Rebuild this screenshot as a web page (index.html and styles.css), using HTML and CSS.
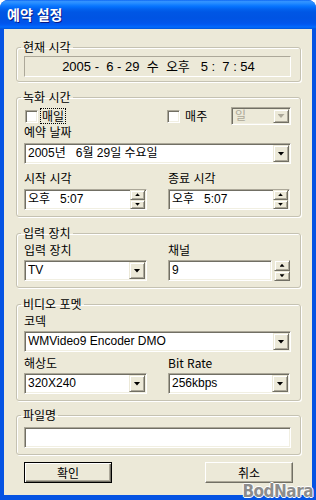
FILE: index.html
```html
<!DOCTYPE html>
<html lang="ko">
<head>
    <meta charset="UTF-8">
    <meta name="viewport" content="width=device-width, initial-scale=1.0">
    <title>예약 설정</title>
    <link rel="stylesheet" href="styles.css">
</head>
<body>
    <div class="window">
        <div class="titlebar"><span class="title">예약 설정</span></div>
        <div class="client">
            <fieldset class="group group-now">
                <legend>현재 시각</legend>
                <div class="clock">2005 -  6 - 29  수  오후   5 :  7 : 54</div>
            </fieldset>

            <fieldset class="group group-rec">
                <legend>녹화 시간</legend>
                <div class="check-row">
                    <label class="check check-day"><span class="box"></span><span class="focus">매일</span></label>
                    <label class="check check-week"><span class="box"></span><span>매주</span></label>
                    <div class="combo combo-day disabled"><span class="value">일</span><span class="drop"></span></div>
                </div>
                <div class="field-label">예약 날짜</div>
                <div class="combo"><span class="value">2005년   6월 29일 수요일</span><span class="drop"></span></div>
                <div class="cols cols-time">
                    <div>
                        <div class="field-label">시작 시각</div>
                        <div class="picker"><span class="value">오후   5:07</span><span class="spin"><span class="up"></span><span class="down"></span></span></div>
                    </div>
                    <div>
                        <div class="field-label">종료 시각</div>
                        <div class="picker"><span class="value">오후   5:07</span><span class="spin"><span class="up"></span><span class="down"></span></span></div>
                    </div>
                </div>
            </fieldset>

            <fieldset class="group group-input">
                <legend>입력 장치</legend>
                <div class="cols">
                    <div>
                        <div class="field-label">입력 장치</div>
                        <div class="combo"><span class="value">TV</span><span class="drop"></span></div>
                    </div>
                    <div>
                        <div class="field-label">채널</div>
                        <div class="updown">
                            <div class="edit"><span class="value">9</span></div>
                            <span class="spin spin-tall"><span class="up"></span><span class="down"></span></span>
                        </div>
                    </div>
                </div>
            </fieldset>

            <fieldset class="group group-video">
                <legend>비디오 포멧</legend>
                <div class="field-label">코덱</div>
                <div class="combo"><span class="value">WMVideo9 Encoder DMO</span><span class="drop"></span></div>
                <div class="cols cols-video">
                    <div>
                        <div class="field-label">해상도</div>
                        <div class="combo"><span class="value">320X240</span><span class="drop"></span></div>
                    </div>
                    <div>
                        <div class="field-label">Bit Rate</div>
                        <div class="combo"><span class="value">256kbps</span><span class="drop"></span></div>
                    </div>
                </div>
            </fieldset>

            <fieldset class="group group-file">
                <legend>파일명</legend>
                <div class="edit"></div>
            </fieldset>

            <div class="buttons">
                <button class="btn btn-default">확인</button>
                <button class="btn">취소</button>
            </div>
        </div>
        <span class="watermark">BodNara</span>
    </div>
</body>
</html>
```

FILE: styles.css
```css
body {
    margin: 0;
    background: #ffffff;
    font-family: "Liberation Sans", "Noto Sans CJK KR", sans-serif;
    font-size: 12px;
    color: #000;
}
.window {
    position: relative;
    width: 316px;
    height: 500px;
    box-sizing: border-box;
    display: flex;
    flex-direction: column;
    background: #0553e3;
    border-radius: 8px 8px 0 0;
    overflow: hidden;
}
.titlebar {
    height: 29px;
    flex: none;
    box-sizing: border-box;
    padding: 6px 0 0 7px;
    background: linear-gradient(to bottom, #0058ee 0, #3593ff 1px, #288eff 3px, #127dff 5px, #036ffc 7px, #0262ee 9px, #0057e5 12px, #0054e3 18px, #0055eb 23px, #005bf5 25px, #026afe 27px, #0062ef 28px, #0052d6 29px);
}
.title {
    color: #fff;
    font-family: "Noto Sans CJK KR", sans-serif;
    font-weight: bold;
    font-size: 14px;
    line-height: 17px;
    text-shadow: 1px 1px 0 #0a1883;
}
.client {
    flex: 1;
    margin: 0 4px 5px 4px;
    padding-top: 11px;
    background: #ece9d8;
}

/* group boxes */
.group {
    width: 285px;
    box-sizing: border-box;
    margin: 0 0 9px 12px;
    padding: 0 9px 6px 7px;
    border: 1px solid #c5c2b2;
    border-radius: 3px;
    box-shadow: inset 1px 1px 0 #fff, 1px 1px 0 #fff;
    min-width: 0;
}
.group legend {
    padding: 0 2px;
    margin-left: -3px;
    line-height: 14px;
    font-family: "Noto Sans CJK KR", sans-serif;
}
.group-now {
    margin-bottom: 8px;
    padding-top: 2px;
    padding-bottom: 4px;
}
.group-rec {
    padding-top: 2px;
}
.group-input {
    padding-top: 3px;
}
.group-video {
    margin-bottom: 7px;
    padding-top: 3px;
}
.group-file {
    margin-bottom: 7px;
    padding-top: 5px;
}
.field-label {
    line-height: 14px;
    font-family: "Noto Sans CJK KR", sans-serif;
    margin-bottom: 4px;
}
.group-input .field-label {
    margin-bottom: 3px;
}
.group-video > .field-label {
    margin-bottom: 3px;
}
.cols {
    display: grid;
    grid-template-columns: 123px 122px;
    column-gap: 21px;
}
.cols-time {
    margin-top: 7px;
}
.cols-video {
    margin-top: 4px;
}
.cols-video .field-label {
    margin-bottom: 3px;
}

/* sunken fields */
.clock {
    height: 21px;
    box-sizing: border-box;
    border: 1px solid;
    border-color: #aca899 #fff #fff #aca899;
    text-align: center;
    white-space: pre;
    font-size: 13px;
    line-height: 19px;
    padding-left: 2px;
}
.combo, .picker, .edit {
    height: 21px;
    box-sizing: border-box;
    display: flex;
    align-items: center;
    background: #fff;
    border: 1px solid;
    border-color: #aca899 #fff #fff #aca899;
    box-shadow: inset 1px 1px 0 #716f64, inset -1px -1px 0 #f1efe2;
    padding: 1px 2px 1px 3px;
}
.value {
    flex: 1;
    white-space: pre;
    overflow: hidden;
    line-height: 17px;
}
.drop {
    width: 16px;
    height: 17px;
    box-sizing: border-box;
    margin-right: -1px;
    display: flex;
    align-items: center;
    justify-content: center;
    background: #ece9d8;
    border: 1px solid;
    border-color: #ece9d8 #716f64 #716f64 #ece9d8;
    box-shadow: inset 1px 1px 0 #fff, inset -1px -1px 0 #aca899;
}
.drop::after {
    content: "";
    width: 7px;
    height: 4px;
    background: #000;
    clip-path: polygon(0 0, 100% 0, 50% 100%);
}
.combo-day {
    width: 60px;
    height: 18px;
    margin-left: auto;
}
.combo-day .drop {
    height: 14px;
}
.disabled {
    background: #ece9d8;
    color: #aca899;
}
.disabled .drop::after {
    background: #aca899;
}

/* spin buttons */
.spin {
    width: 15px;
    display: flex;
    flex-direction: column;
    align-self: stretch;
    margin: -1px -1px -1px 0;
}
.spin .up, .spin .down {
    flex: 1;
    display: flex;
    align-items: center;
    justify-content: center;
    background: #ece9d8;
    border: 1px solid;
    border-color: #ece9d8 #716f64 #716f64 #ece9d8;
    box-shadow: inset 1px 1px 0 #fff, inset -1px -1px 0 #aca899;
}
.spin .up::after, .spin .down::after {
    content: "";
    width: 5px;
    height: 3px;
    background: #000;
}
.spin .up::after {
    clip-path: polygon(50% 0, 100% 100%, 0 100%);
}
.spin .down::after {
    clip-path: polygon(0 0, 100% 0, 50% 100%);
}
.updown {
    display: flex;
    gap: 2px;
}
.updown .edit {
    flex: 1;
}
.spin-tall {
    width: 16px;
    height: 21px;
    margin: 0;
}

/* checkboxes */
.check-row {
    height: 18px;
    display: flex;
    align-items: center;
    margin-top: 1px;
    margin-left: 1px;
}
.check {
    display: flex;
    align-items: center;
    font-family: "Noto Sans CJK KR", sans-serif;
    line-height: 14px;
}
.check .box {
    width: 13px;
    height: 13px;
    box-sizing: border-box;
    margin-right: 3px;
    background: #fff;
    border: 1px solid;
    border-color: #aca899 #fff #fff #aca899;
    box-shadow: inset 1px 1px 0 #716f64, inset -1px -1px 0 #f1efe2;
}
.check .focus {
    padding: 0 1px;
    outline: 1px dotted #000;
}
.check-week {
    margin-left: 102px;
}
.check-week .box {
    margin-right: 5px;
}

/* buttons */
.buttons {
    display: flex;
    justify-content: space-between;
    padding: 0 19px 0 20px;
}
.btn {
    width: 88px;
    height: 21px;
    box-sizing: border-box;
    padding: 0;
    background: #ece9d8;
    font-family: "Noto Sans CJK KR", sans-serif;
    font-size: 12px;
    color: #000;
    border: 1px solid;
    border-color: #fff #716f64 #716f64 #fff;
    box-shadow: inset -1px -1px 0 #aca899;
}
.btn-default {
    border: 1px solid #000;
    box-shadow: inset 1px 1px 0 #fff, inset -1px -1px 0 #716f64, inset -2px -2px 0 #aca899;
}

.watermark {
    position: absolute;
    right: 3px;
    bottom: 0;
    font-family: "DejaVu Sans Condensed", "DejaVu Sans", sans-serif;
    font-weight: bold;
    font-size: 17px;
    line-height: 18px;
    color: #8c8c8c;
    letter-spacing: -0.5px;
    text-shadow: -1px 0 0 #fff, 1px 0 0 #fff, 0 -1px 0 #fff, 0 1px 0 #fff;
}
```
